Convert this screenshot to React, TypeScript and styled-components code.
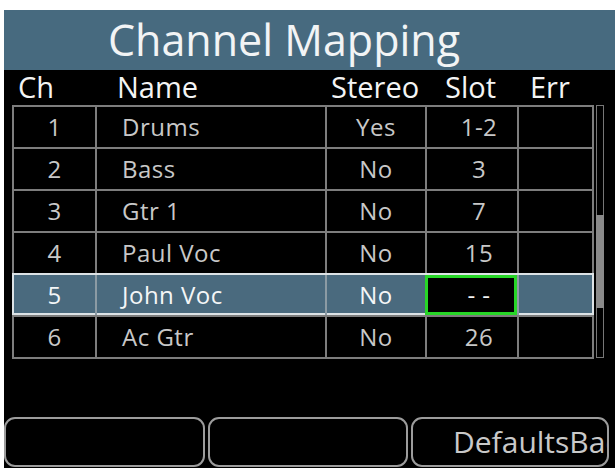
import React from 'react';
import styled, { createGlobalStyle } from 'styled-components';

const GlobalStyle = createGlobalStyle`
  html, body {
    margin: 0;
    padding: 0;
    background: #ffffff;
  }
  * {
    box-sizing: border-box;
  }
`;

type Channel = {
  ch: number;
  name: string;
  stereo: string;
  slot: string;
  err: string;
};

const channels: Channel[] = [
  { ch: 1, name: 'Drums', stereo: 'Yes', slot: '1-2', err: '' },
  { ch: 2, name: 'Bass', stereo: 'No', slot: '3', err: '' },
  { ch: 3, name: 'Gtr 1', stereo: 'No', slot: '7', err: '' },
  { ch: 4, name: 'Paul Voc', stereo: 'No', slot: '15', err: '' },
  { ch: 5, name: 'John Voc', stereo: 'No', slot: '- -', err: '' },
  { ch: 6, name: 'Ac Gtr', stereo: 'No', slot: '26', err: '' },
];

const SELECTED = 5;

const Screen = styled.div`
  margin: 10px 0 0 4px;
  width: 611px;
  height: 458px;
  background: #000;
  display: flex;
  flex-direction: column;
  font-family: 'Open Sans', 'Noto Sans', sans-serif;
  overflow: hidden;
`;

const TitleBar = styled.div`
  height: 60px;
  background: #476a7f;
  color: #f2f4f5;
  font-size: 43px;
  line-height: 60px;
  padding-left: 104px;
  white-space: nowrap;
`;

const HeaderRow = styled.div`
  height: 35px;
  display: grid;
  grid-template-columns: 91px 230px 100px 92px 1fr;
  color: #f4f4f4;
  font-size: 29px;
  line-height: 33px;
`;

const HeaderCell = styled.div<{ $pad: number }>`
  padding-left: ${(p) => p.$pad}px;
  white-space: nowrap;
`;

const TableArea = styled.div`
  display: flex;
  gap: 2px;
  padding-left: 8px;
`;

const Table = styled.div`
  width: 582px;
  border: 2px solid #7d7d7d;
  display: flex;
  flex-direction: column;
`;

const Row = styled.div<{ $selected?: boolean; $first?: boolean }>`
  display: grid;
  grid-template-columns: 81px 230px 100px 92px 1fr;
  height: ${(p) => (p.$first ? 40 : 42)}px;
  border-top: ${(p) => (p.$first ? 'none' : '2px solid #7d7d7d')};
  background: ${(p) => (p.$selected ? '#4a6a7e' : '#000')};
  color: ${(p) => (p.$selected ? '#f4f6f7' : '#c8c8c8')};
  font-size: 24px;
  letter-spacing: 0.5px;
  position: relative;
  ${(p) =>
    p.$selected &&
    `
    margin: 0 -2px;
    padding: 0 2px;
    outline: 2px solid #dde3e6;
    outline-offset: -2px;
    z-index: 1;
  `}
`;

const Cell = styled.div<{ $align?: 'left' | 'center'; $pad?: number; $focused?: boolean; $selected?: boolean }>`
  border-left: 2px solid ${(p) => (p.$selected ? '#8c9ba4' : '#7d7d7d')};
  text-align: ${(p) => p.$align ?? 'center'};
  padding-left: ${(p) => p.$pad ?? 0}px;
  line-height: 40px;
  white-space: nowrap;
  overflow: hidden;
  position: relative;
  &:first-child {
    border-left: none;
  }
  ${(p) =>
    p.$focused &&
    `
    background: #000;
    outline: 3px solid #27d627;
    outline-offset: -3px;
    z-index: 2;
    color: #f4f4f4;
  `}
`;

const ScrollTrack = styled.div`
  width: 8px;
  height: 253px;
  border: 1px solid #777;
  display: flex;
  flex-direction: column;
`;

const ScrollThumb = styled.div<{ $top: number; $size: number }>`
  margin-top: ${(p) => p.$top}px;
  height: ${(p) => p.$size}px;
  margin-left: -1px;
  margin-right: -1px;
  background: #8a8a8a;
`;

const ButtonBar = styled.div`
  margin-top: auto;
  display: flex;
  gap: 3px;
  padding-bottom: 1px;
`;

const SoftButton = styled.div<{ $width: number }>`
  width: ${(p) => p.$width}px;
  height: 50px;
  border: 2px solid #9c9c9c;
  border-radius: 11px;
  color: #c9c9c9;
  font-size: 30px;
  line-height: 46px;
  padding-left: 40px;
  white-space: nowrap;
  overflow: hidden;
  flex-shrink: 0;
`;

export default function App() {
  return (
    <>
      <GlobalStyle />
      <Screen>
        <TitleBar>Channel Mapping</TitleBar>
        <HeaderRow>
          <HeaderCell $pad={14}>Ch</HeaderCell>
          <HeaderCell $pad={22}>Name</HeaderCell>
          <HeaderCell $pad={6}>Stereo</HeaderCell>
          <HeaderCell $pad={20}>Slot</HeaderCell>
          <HeaderCell $pad={13}>Err</HeaderCell>
        </HeaderRow>
        <TableArea>
          <Table>
            {channels.map((c, i) => {
              const sel = c.ch === SELECTED;
              return (
                <Row key={c.ch} $first={i === 0} $selected={sel}>
                  <Cell $selected={sel}>{c.ch}</Cell>
                  <Cell $selected={sel} $align="left" $pad={25}>
                    {c.name}
                  </Cell>
                  <Cell $selected={sel}>{c.stereo}</Cell>
                  <Cell $selected={sel} $pad={14} $focused={sel}>
                    {c.slot}
                  </Cell>
                  <Cell $selected={sel}>{c.err}</Cell>
                </Row>
              );
            })}
          </Table>
          <ScrollTrack>
            <ScrollThumb $top={109} $size={93} />
          </ScrollTrack>
        </TableArea>
        <ButtonBar>
          <SoftButton $width={201} />
          <SoftButton $width={200} />
          <SoftButton $width={198}>DefaultsBack</SoftButton>
        </ButtonBar>
      </Screen>
    </>
  );
}
